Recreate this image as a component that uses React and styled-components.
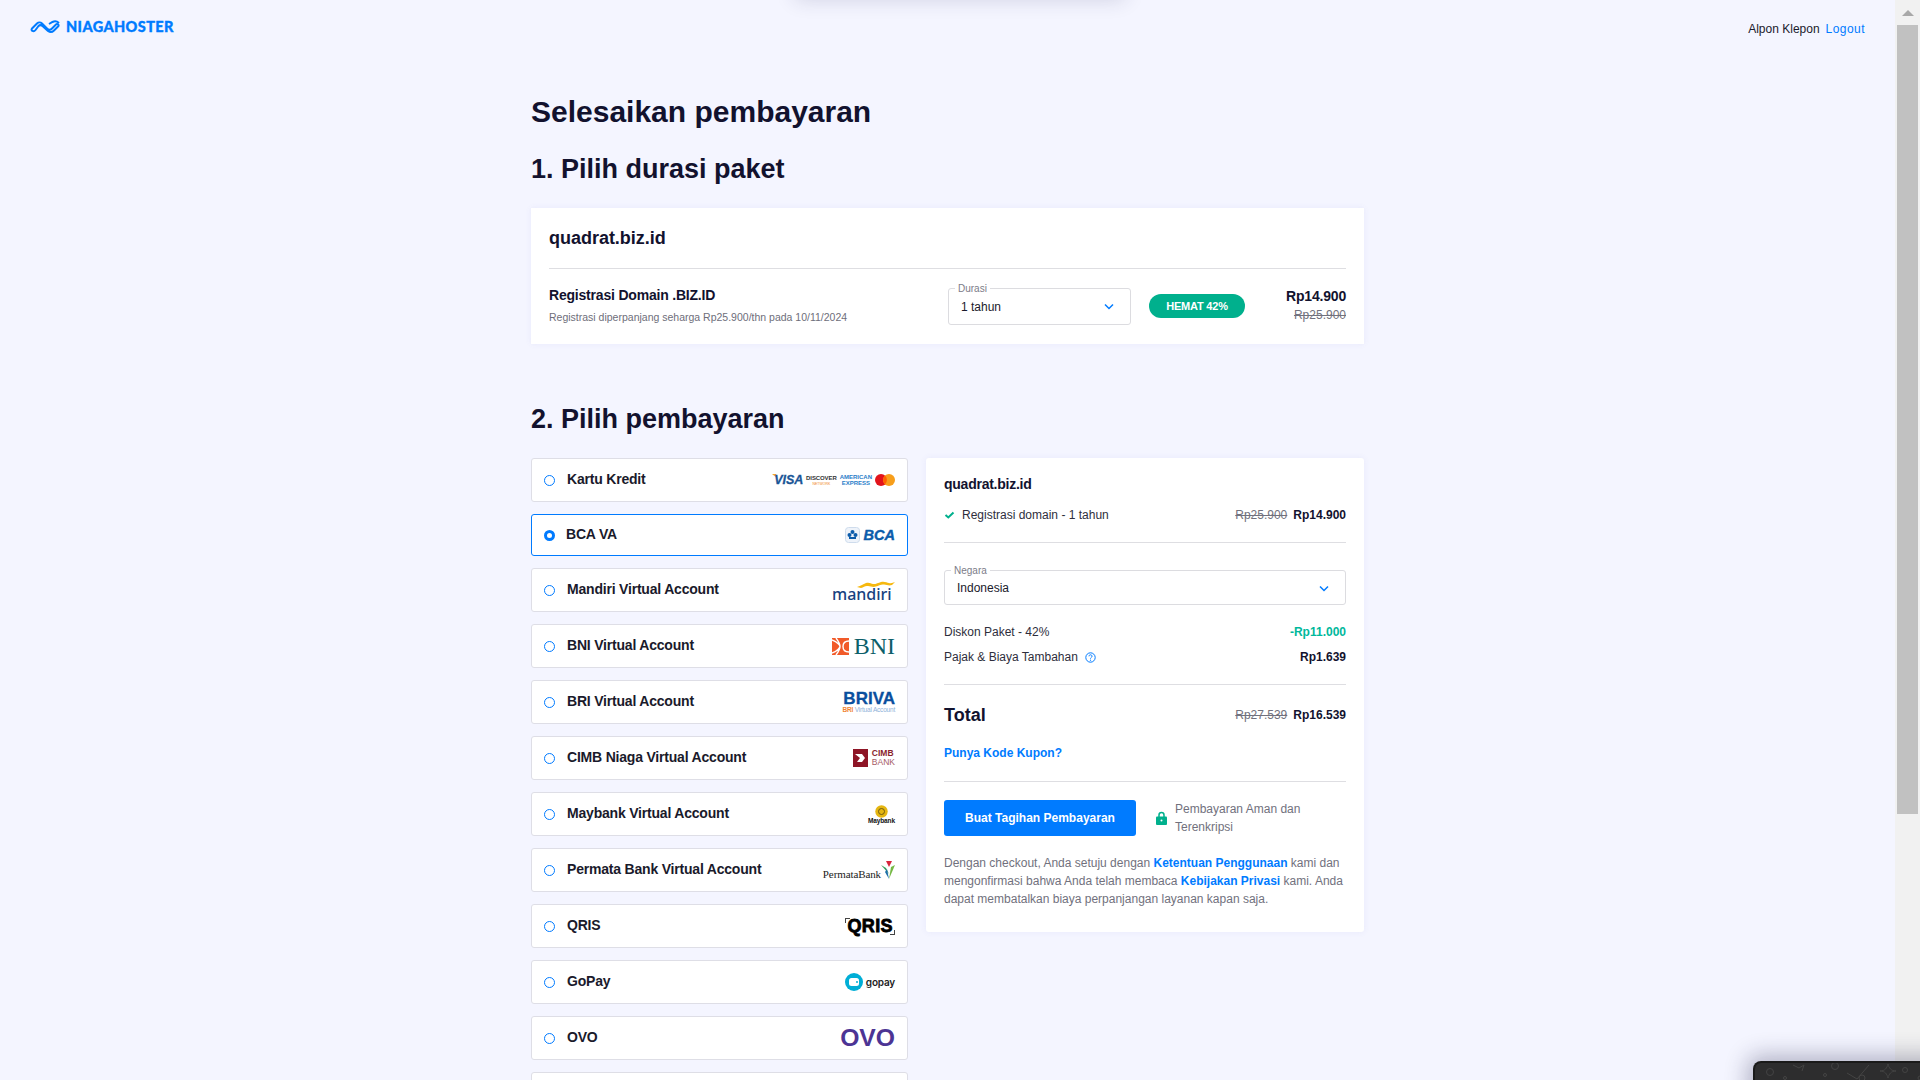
import React from "react";
import styled, { createGlobalStyle } from "styled-components";

const Global = createGlobalStyle`
  html, body { margin: 0; padding: 0; height: 100%; overflow: hidden; background: #f4f5ff; }
  body { font-family: "Liberation Sans", Arial, sans-serif; color: #1a1a2b; }
  * { box-sizing: border-box; }
`;

const Shell = styled.div`display: flex; height: 1080px; overflow: hidden;`;
const Main = styled.main`flex: 1; min-width: 0; height: 1080px; overflow: hidden;`;

const ScrollTrack = styled.aside`
  width: 25px; height: 1080px; background: #f1f1f1; display: flex; flex-direction: column; align-items: center;
`;
const ScrollArrow = styled.div`
  height: 25px; width: 100%; display: flex; align-items: center; justify-content: center;
  &::before { content: ""; border-left: 6px solid transparent; border-right: 6px solid transparent; border-bottom: 6px solid #a8a8a8; }
`;
const ScrollThumb = styled.div`width: 21px; height: 789px; background: #c1c1c1;`;

const Header = styled.header`
  height: 56px; display: flex; justify-content: space-between; padding: 19px 30px 0 30px;
`;
const Brand = styled.div`display: flex; align-items: flex-start; gap: 5px; margin-top: -2px;`;
const BrandName = styled.span`
  font-family: Lato, "Liberation Sans", sans-serif; font-weight: 900; font-size: 14.5px; line-height: 20px;
  letter-spacing: 0.4px; color: #007bff; -webkit-text-stroke: 0.35px #007bff;
`;
const User = styled.div`font-size: 12px; line-height: 20px; color: #1a1a2b; display: flex; gap: 6px;`;
const Link = styled.a`color: #007bff; font-weight: ${p => (p.$bold ? 700 : 400)};`;
const LogoutLink = styled(Link)`letter-spacing: 0.45px;`;

const Content = styled.div`width: 833px; margin: 0 auto;`;
const PageTitle = styled.h1`margin: 36px 0 0; font-size: 30px; line-height: 38px; font-weight: 700; color: #12122e; transform: translateY(1px);`;
const SectionTitle = styled.h2`margin: ${p => p.$mt}px 0 0; font-size: 27px; line-height: 38px; font-weight: 700; color: #12122e;`;

const Card = styled.section`
  background: #fff; box-shadow: 0 0 6px rgba(90, 90, 200, 0.08);
`;
const DurationCard = styled(Card)`margin-top: 20px; height: 136px; padding: 0 18px;`;
const DomainName = styled.div`font-size: 18px; line-height: 22px; font-weight: 700; letter-spacing: -0.02px; padding-top: 19px; height: 61px; border-bottom: 1px solid #dedee2; color: #12122e;`;
const DurationRow = styled.div`display: flex; align-items: center; height: 74px;`;
const ProductInfo = styled.div`flex: 1; margin-top: -2px;`;
const ProductName = styled.div`font-size: 14px; line-height: 18px; font-weight: 700; letter-spacing: -0.2px; color: #12122e;`;
const ProductNote = styled.div`font-size: 10.5px; line-height: 14px; margin-top: 6px; color: #6e6e7a;`;
const SelectBox = styled.div`
  position: relative; width: ${p => p.$w}; height: ${p => p.$h}px; margin-top: ${p => p.$mt || 0}px; border: 1px solid #dcdce0; border-radius: 3px;
  display: flex; align-items: center; justify-content: space-between; padding: 1px 16px 0 12px; font-size: 12px; color: #1a1a2b; background: #fff;
`;
const SelectLabel = styled.span`
  position: absolute; left: 6px; top: -6px; padding: 0 3px; background: #fff; font-size: 10px; line-height: 11px; color: #7c7c88;
`;
const Pill = styled.div`
  width: 96px; height: 24px; margin-left: 18px; border-radius: 12px; background: #00b08d; color: #fff; font-size: 11px; font-weight: 700;
  display: flex; align-items: center; justify-content: center; letter-spacing: -0.2px;
`;
const PriceStack = styled.div`width: 101px; text-align: right; margin-top: -3px;`;
const PriceNow = styled.div`font-size: 14px; line-height: 18px; font-weight: 700; letter-spacing: -0.2px; color: #12122e;`;
const PriceOld = styled.div`font-size: 12px; line-height: 14px; margin-top: 3px; text-decoration: line-through; color: #71717d;`;

const Columns = styled.div`display: flex; gap: 18px; align-items: flex-start; margin-top: 20px;`;
const MethodList = styled.div`width: 377px; display: flex; flex-direction: column; gap: 12px;`;
const Method = styled.div`
  height: ${p => (p.$selected ? 42 : 44)}px; flex: none; background: #fff; border-radius: 3px;
  border: 1px solid ${p => (p.$selected ? "#007bff" : "#dedee6")};
  display: flex; align-items: center; padding: 0 12px 0 12px;
`;
const Radio = styled.span`
  width: 11px; height: 11px; border-radius: 50%; flex: none; background: #fff;
  border: ${p => (p.$on ? "3.5px solid #007bff" : "1px solid #007bff")};
`;
const MethodName = styled.span`flex: 1; margin-left: ${p => (p.$on ? 11 : 12)}px; font-size: 14px; line-height: 16px; font-weight: 700; letter-spacing: -0.2px; color: #1a1a2b; margin-top: -3px;`;

const Logo = styled.span`display: inline-flex; align-items: center; gap: ${p => p.$gap || 0}px; flex: none; white-space: nowrap;`;
const LogoStack = styled.span`display: inline-flex; flex-direction: column; align-items: ${p => p.$align || "flex-end"};`;
const Visa = styled.span`font-size: 12.5px; line-height: 12px; font-weight: 700; font-style: italic; color: #1a5596; -webkit-text-stroke: 0.3px #1a5596; letter-spacing: -0.1px;`;
const Discover = styled.span`font-size: 6px; line-height: 7px; font-weight: 700; color: #333; letter-spacing: -0.1px;`;
const DiscoverSub = styled.span`font-size: 3.5px; line-height: 4px; color: #f08a24;`;
const Amex = styled.span`font-size: 6px; line-height: 6px; font-weight: 700; color: #2b7ec9; letter-spacing: 0;`;
const Bca = styled.span`font-size: 14.5px; line-height: 16px; font-weight: 700; font-style: italic; color: #0b5cab; -webkit-text-stroke: 0.4px #0b5cab;`;
const MandiriStack = styled(LogoStack)`width: 63px;`;
const Mandiri = styled.span`align-self: flex-start; font-family: "Noto Sans", sans-serif; font-size: 16px; line-height: 12px; color: #17427f; font-weight: 500; margin-top: -2px;`;
const Bni = styled.span`font-family: "Liberation Serif", serif; font-size: 24px; line-height: 20px; color: #0d5f6a;`;
const Briva = styled.span`font-size: 17px; line-height: 14px; font-weight: 700; color: #0a4f9e; -webkit-text-stroke: 0.3px #0a4f9e;`;
const BrivaSub = styled.span`font-size: 6.5px; line-height: 7px; color: #8fb2d9; letter-spacing: -0.2px;`;
const BrivaSubAccent = styled.span`color: #f08433; font-weight: 700;`;
const Cimb = styled.span`font-size: 8.5px; line-height: 9px; font-weight: 700; color: #8a1f2d;`;
const CimbBank = styled.span`font-size: 8.5px; line-height: 9px; color: #a65a64;`;
const Maybank = styled.span`font-size: 6.5px; line-height: 6px; font-weight: 700; color: #111; letter-spacing: -0.1px;`;
const Permata = styled.span`font-family: "Liberation Serif", serif; font-size: 11px; line-height: 12px; color: #222; margin-top: 7px; letter-spacing: -0.1px;`;
const Qris = styled.span`
  position: relative; font-size: 18px; line-height: 17px; font-weight: 700; color: #000; letter-spacing: 0.4px; padding: 0 2px; -webkit-text-stroke: 0.8px #000;
  &::before, &::after { content: ""; position: absolute; width: 4px; height: 4px; border: 1px solid #444; }
  &::before { left: 0; top: 0; border-right: 0; border-bottom: 0; }
  &::after { right: 0; bottom: 0; border-left: 0; border-top: 0; }
`;
const Gopay = styled.span`font-family: Inter, sans-serif; font-size: 10px; line-height: 10px; font-weight: 600; color: #222; letter-spacing: -0.2px;`;
const Ovo = styled.span`font-size: 24.7px; line-height: 20px; font-weight: 700; color: #4c3494;`;

const Summary = styled(Card)`width: 438px; height: 474px; border-radius: 3px; padding: 0 18px;`;
const SummaryName = styled.div`font-size: 14px; line-height: 18px; font-weight: 700; letter-spacing: -0.25px; padding-top: 17px; color: #12122e;`;
const SummaryRow = styled.div`
  display: flex; justify-content: space-between; align-items: center; font-size: 12px; line-height: 16px; color: #2e2e3c; margin-top: ${p => p.$mt || 0}px;
`;
const RowLabel = styled.span`display: inline-flex; align-items: center; gap: ${p => p.$gap || 0}px;`;
const Prices = styled.span`display: inline-flex; gap: 6px; align-items: center;`;
const Strike = styled.span`text-decoration: line-through; color: #71717d;`;
const Strong = styled.span`font-weight: 700; color: ${p => p.$color || "#12122e"};`;
const Rule = styled.hr`border: 0; height: 1px; background: #dedee2; margin: ${p => p.$mt}px 0 0;`;
const TotalRow = styled(SummaryRow)`margin-top: 19px;`;
const TotalLabel = styled.span`font-size: 18px; line-height: 22px; font-weight: 700; color: #12122e;`;
const Coupon = styled.div`font-size: 12px; line-height: 16px; font-weight: 700; color: #007bff; margin-top: 19px;`;
const ActionRow = styled.div`display: flex; align-items: center; margin-top: 18px;`;
const PayButton = styled.button`
  width: 192px; height: 36px; border: 0; border-radius: 3px; background: #007bff; color: #fff; font: 700 12px/16px "Liberation Sans", Arial, sans-serif; flex: none;
`;
const Secure = styled.div`display: flex; align-items: center; gap: 8px; margin-left: 20px; font-size: 12px; line-height: 18px; color: #71717d;`;
const Terms = styled.p`margin: 18px 0 0; font-size: 12px; line-height: 18px; color: #71717d;`;

const TopSheet = styled.div`
  position: fixed; left: 795px; top: -30px; width: 330px; height: 30px; box-shadow: 0 0 20px rgba(40, 40, 90, 0.16);
`;
const DockWidget = styled.div`
  position: fixed; left: 1753px; top: 1061px; width: 190px; height: 60px; background: #2d2d2e; border: 2px solid #1a1a1a; border-bottom: 0;
  border-radius: 8px 0 0 0; box-shadow: 0 0 22px 6px rgba(30, 30, 70, 0.3); overflow: hidden;
`;

const Chevron = () => (
  <svg width="10" height="7" viewBox="0 0 10 7" fill="none"><path d="M1 1.5 5 5.5 9 1.5" stroke="#007bff" strokeWidth="1.5" /></svg>
);

const BrandMark = () => (
  <svg width="31" height="14" viewBox="0 0 31 14" fill="none" style={{ marginTop: 3 }}>
    <path d="M2 8.5 7 3.5C8.5 2 10.5 2 12 3.5L17 8.5C18.5 10 20.5 10 22 8.5L26 4.5C27 3.2 29 4.5 28.5 6L24 10.5C22.5 12 20 12.5 18 11L12.5 6C11 4.8 9.5 5 8.5 6L5.5 10C3.5 12.5 .5 10.5 2 8.5Z" stroke="#007bff" strokeWidth="2" strokeLinejoin="round" />
    <path d="M19 4 22.5 2C24.5 1 27 1.2 29 3" stroke="#007bff" strokeWidth="2" />
  </svg>
);

const Mastercard = () => (
  <svg width="20" height="12" viewBox="0 0 20 12"><circle cx="6" cy="6" r="6" fill="#e2141c" /><circle cx="14" cy="6" r="6" fill="#f79e1b" /><path d="M10 1.6a6 6 0 0 1 0 8.8 6 6 0 0 1 0-8.8Z" fill="#ff5f00" /></svg>
);
const VisaWing = () => (
  <svg width="5" height="5" viewBox="0 0 5 5" style={{ marginRight: -6, marginTop: -7 }}><path d="M0 0h4l1 4Z" fill="#f4a62a" /></svg>
);

const CardLogos = () => (
  <Logo $gap={3}>
    <VisaWing /><Visa>VISA</Visa>
    <LogoStack $align="center"><Discover>DISCOVER</Discover><DiscoverSub>NETWORK</DiscoverSub></LogoStack>
    <LogoStack $align="center"><Amex>AMERICAN</Amex><Amex>EXPRESS</Amex></LogoStack>
    <Mastercard />
  </Logo>
);
const BcaLogo = () => (
  <Logo $gap={4}>
    <svg width="15" height="16" viewBox="0 0 15 16"><rect x=".5" y=".5" width="14" height="15" rx="3" fill="#eef3fa" stroke="#cfdcec" /><circle cx="7.5" cy="5" r="2" fill="#0b5cab" /><circle cx="4.5" cy="8" r="2" fill="#0b5cab" /><circle cx="10.5" cy="8" r="2" fill="#0b5cab" /><path d="M4 10h7v2H4z" fill="#0b5cab" /></svg>
    <Bca>BCA</Bca>
  </Logo>
);
const MandiriLogo = () => (
  <MandiriStack>
    <svg width="38" height="9" viewBox="0 0 38 9"><path d="M0 6C4 5 6 3 9 2s5 .5 7 1 5-1 8-2 6 .5 8 1 4 0 6-1l-3 3c-3 1-5 0-8-.5s-5 1-8 2-5 0-8-.5-4 1-7 2Z" fill="#f6b80f" /></svg>
    <Mandiri>mandiri</Mandiri>
  </MandiriStack>
);
const BniLogo = () => (
  <Logo $gap={5}>
    <svg width="17" height="17" viewBox="0 0 17 17"><rect width="17" height="17" fill="#f15a29" /><path d="M0 2c6 2 8 6 8 6.500S6 13 0 15M17 3c-5 0-6 3-6 5.500s1 5.500 6 5.500M4 0c3 4 4 6 4 8.500S7 13 4 17" fill="none" stroke="#fff" strokeWidth="1.400" /></svg>
    <Bni>BNI</Bni>
  </Logo>
);
const BrivaLogo = () => (
  <LogoStack>
    <Briva>BRIVA</Briva>
    <BrivaSub><BrivaSubAccent>BRI</BrivaSubAccent> Virtual Account</BrivaSub>
  </LogoStack>
);
const CimbLogo = () => (
  <Logo $gap={4}>
    <svg width="15" height="18" viewBox="0 0 15 18"><rect width="15" height="18" fill="#8e1526" /><path d="M2 5h7l3 4-3 4H4l3-4Z" fill="#fff" /></svg>
    <LogoStack $align="flex-start"><Cimb>CIMB</Cimb><CimbBank>BANK</CimbBank></LogoStack>
  </Logo>
);
const MaybankLogo = () => (
  <LogoStack $align="center">
    <svg width="13" height="13" viewBox="0 0 13 13"><circle cx="6.500" cy="6.500" r="6.200" fill="#e5b611" /><circle cx="6.500" cy="6.500" r="3" fill="none" stroke="#6f5a10" strokeWidth="1" /></svg>
    <Maybank>Maybank</Maybank>
  </LogoStack>
);
const PermataLogo = () => (
  <Logo>
    <Permata>PermataBank</Permata>
    <svg width="14" height="18" viewBox="0 0 14 18"><path d="M5 0h6L8 6Z" fill="#d7263d" /><path d="M0 4l5 3 3 6Z" fill="#2f9e58" /><path d="M14 4 10 6 8 18Z" fill="#74b843" /><path d="M6 8l2 10-4-7Z" fill="#1d6fa8" /></svg>
  </Logo>
);
const QrisLogo = () => <Logo><Qris>QRIS</Qris></Logo>;
const GopayLogo = () => (
  <Logo $gap={3}>
    <svg width="18" height="18" viewBox="0 0 18 18"><circle cx="9" cy="9" r="9" fill="#00aed6" /><rect x="4" y="5" width="10" height="8" rx="2.500" fill="#fff" /><circle cx="12" cy="9" r="1" fill="#00aed6" /></svg>
    <Gopay>gopay</Gopay>
  </Logo>
);
const OvoLogo = () => <Logo><Ovo>OVO</Ovo></Logo>;

const methods = [
  ["Kartu Kredit", CardLogos],
  ["BCA VA", BcaLogo, true],
  ["Mandiri Virtual Account", MandiriLogo],
  ["BNI Virtual Account", BniLogo],
  ["BRI Virtual Account", BrivaLogo],
  ["CIMB Niaga Virtual Account", CimbLogo],
  ["Maybank Virtual Account", MaybankLogo],
  ["Permata Bank Virtual Account", PermataLogo],
  ["QRIS", QrisLogo],
  ["GoPay", GopayLogo],
  ["OVO", OvoLogo],
  ["", null],
];

export default function App() {
  return (
    <>
      <Global />
      <Shell>
        <Main>
          <Header>
            <Brand><BrandMark /><BrandName>NIAGAHOSTER</BrandName></Brand>
            <User><span>Alpon Klepon</span><LogoutLink>Logout</LogoutLink></User>
          </Header>
          <Content>
            <PageTitle>Selesaikan pembayaran</PageTitle>
            <SectionTitle $mt={20}>1. Pilih durasi paket</SectionTitle>
            <DurationCard>
              <DomainName>quadrat.biz.id</DomainName>
              <DurationRow>
                <ProductInfo>
                  <ProductName>Registrasi Domain .BIZ.ID</ProductName>
                  <ProductNote>Registrasi diperpanjang seharga Rp25.900/thn pada 10/11/2024</ProductNote>
                </ProductInfo>
                <SelectBox $w="183px" $h={37}>
                  <SelectLabel>Durasi</SelectLabel>
                  <span>1 tahun</span>
                  <Chevron />
                </SelectBox>
                <Pill>HEMAT 42%</Pill>
                <PriceStack>
                  <PriceNow>Rp14.900</PriceNow>
                  <PriceOld>Rp25.900</PriceOld>
                </PriceStack>
              </DurationRow>
            </DurationCard>
            <SectionTitle $mt={56}>2. Pilih pembayaran</SectionTitle>
            <Columns>
              <MethodList>
                {methods.map(([name, L, on], i) => (
                  <Method key={i} $selected={on}>
                    <Radio $on={on} />
                    <MethodName $on={on}>{name}</MethodName>
                    {L && <L />}
                  </Method>
                ))}
              </MethodList>
              <Summary>
                <SummaryName>quadrat.biz.id</SummaryName>
                <SummaryRow $mt={14}>
                  <RowLabel $gap={7}>
                    <svg width="11" height="8" viewBox="0 0 11 8" fill="none"><path d="M1.500 4 4.300 6.500 9.500 1.500" stroke="#00b08d" strokeWidth="2" /></svg>
                    Registrasi domain - 1 tahun
                  </RowLabel>
                  <Prices><Strike>Rp25.900</Strike><Strong>Rp14.900</Strong></Prices>
                </SummaryRow>
                <Rule $mt={19} />
                <SelectBox $w="100%" $h={35} $mt={27}>
                  <SelectLabel>Negara</SelectLabel>
                  <span>Indonesia</span>
                  <Chevron />
                </SelectBox>
                <SummaryRow $mt={19}><span>Diskon Paket - 42%</span><Strong $color="#00b89c">-Rp11.000</Strong></SummaryRow>
                <SummaryRow $mt={9}>
                  <RowLabel $gap={7}>
                    Pajak & Biaya Tambahan
                    <svg width="11" height="11" viewBox="0 0 11 11" fill="none"><circle cx="5.500" cy="5.500" r="4.700" stroke="#007bff" /><path d="M4 4.300c0-2 3-2 3 0 0 1.200-1.500 1.200-1.500 2.300" stroke="#007bff" /><circle cx="5.500" cy="8.200" r=".6" fill="#007bff" /></svg>
                  </RowLabel>
                  <Strong>Rp1.639</Strong>
                </SummaryRow>
                <Rule $mt={19} />
                <TotalRow>
                  <TotalLabel>Total</TotalLabel>
                  <Prices><Strike>Rp27.539</Strike><Strong>Rp16.539</Strong></Prices>
                </TotalRow>
                <Coupon>Punya Kode Kupon?</Coupon>
                <Rule $mt={20} />
                <ActionRow>
                  <PayButton>Buat Tagihan Pembayaran</PayButton>
                  <Secure>
                    <svg width="11" height="14" viewBox="0 0 11 14" fill="none"><path d="M3 6V4a2.500 2.500 0 0 1 5 0v2" stroke="#00b08d" strokeWidth="1.500" /><rect y="5.500" width="11" height="8.500" rx="1" fill="#00b08d" /><circle cx="5.500" cy="9.500" r="1" fill="#fff" /></svg>
                    <span>Pembayaran Aman dan<br />Terenkripsi</span>
                  </Secure>
                </ActionRow>
                <Terms>
                  Dengan checkout, Anda setuju dengan <Link $bold>Ketentuan Penggunaan</Link> kami dan mengonfirmasi bahwa Anda telah membaca <Link $bold>Kebijakan Privasi</Link> kami. Anda dapat membatalkan biaya perpanjangan layanan kapan saja.
                </Terms>
              </Summary>
            </Columns>
          </Content>
        </Main>
        <ScrollTrack>
          <ScrollArrow />
          <ScrollThumb />
        </ScrollTrack>
      </Shell>
      <TopSheet />
      <DockWidget>
        <svg width="190" height="20" viewBox="0 0 190 20" fill="none" stroke="#444">
          <circle cx="15" cy="9" r="3.500" /><circle cx="30" cy="15" r="1.500" /><path d="M38 2l6 3 5-3-2 6" /><circle cx="70" cy="12" r="1.500" /><circle cx="80" cy="3" r="3.500" /><path d="M92 10l10 6 12-14" /><circle cx="107" cy="15" r="3" /><path d="M125 8c5 0 7-3 8-7 1 4 3 7 8 7-5 0-7 3-8 7-1-4-3-7-8-7Z" /><circle cx="150" cy="7" r="2.500" /><circle cx="165" cy="15" r="2" />
        </svg>
      </DockWidget>
    </>
  );
}
